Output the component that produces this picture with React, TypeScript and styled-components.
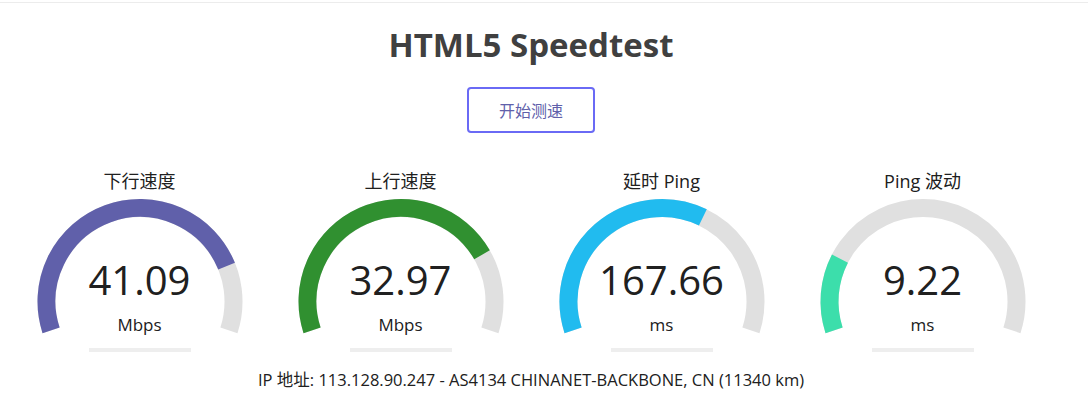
import styled, { createGlobalStyle } from "styled-components";

const GlobalStyle = createGlobalStyle`
  html, body {
    margin: 0;
    padding: 0;
    background: #ffffff;
  }
  body {
    font-family: "Open Sans", "Noto Sans CJK SC", sans-serif;
    color: #202020;
  }
`;

const Page = styled.div`
  width: 1088px;
  height: 416px;
  box-sizing: border-box;
  padding-right: 26px;
  display: flex;
  flex-direction: column;
  align-items: center;
`;

const TopRule = styled.div`
  align-self: stretch;
  margin-top: 2px;
  height: 1px;
  margin-right: -26px;
  background: #ececec;
`;

const Title = styled.h1`
  margin: 21px 0 0;
  font-size: 33px;
  line-height: 42px;
  font-weight: 700;
  color: #404040;
`;

const StartButton = styled.button`
  margin-top: 21px;
  width: 128px;
  height: 46px;
  box-sizing: border-box;
  border: 2px solid #6a6af5;
  border-radius: 4px;
  background: #ffffff;
  color: #6060aa;
  font-family: "Open Sans", "Noto Sans CJK SC", sans-serif;
  font-size: 16px;
  cursor: pointer;
`;

const Gauges = styled.div`
  margin-top: 36px;
  display: flex;
  width: 1044px;
`;

const GaugeArea = styled.div`
  width: 261px;
  display: flex;
  flex-direction: column;
  align-items: center;
`;

const Label = styled.div`
  font-size: 18px;
  line-height: 24px;
  color: #202020;
`;

const Meter = styled.div`
  position: relative;
  margin-top: 1px;
  width: 220px;
  height: 150px;
`;

const Value = styled.div`
  position: absolute;
  left: 0;
  right: 0;
  top: 62px;
  text-align: center;
  font-size: 40px;
  line-height: 48px;
  font-weight: 400;
  color: #202020;
`;

const Unit = styled.div`
  position: absolute;
  left: 0;
  right: 0;
  top: 119px;
  text-align: center;
  font-size: 17px;
  line-height: 24px;
  color: #202020;
`;

const ProgressTrack = styled.div`
  margin-top: 4px;
  width: 102px;
  height: 4px;
  background: #eeeeee;
`;

const IpLine = styled.div`
  margin-top: 17px;
  font-size: 16.5px;
  line-height: 22px;
  color: #202020;
`;

const CX = 110;
const CY = 107.5;
const R = 93.5;
const START = -1.1 * Math.PI;
const SPAN = 1.2 * Math.PI;

function arcPath(fraction: number) {
  const end = START + SPAN * fraction;
  const x1 = CX + R * Math.cos(START);
  const y1 = CY + R * Math.sin(START);
  const x2 = CX + R * Math.cos(end);
  const y2 = CY + R * Math.sin(end);
  const large = SPAN * fraction > Math.PI ? 1 : 0;
  return `M ${x1} ${y1} A ${R} ${R} 0 ${large} 1 ${x2} ${y2}`;
}

type GaugeProps = {
  label: string;
  value: string;
  unit: string;
  amount: number;
  color: string;
};

function Gauge({ label, value, unit, amount, color }: GaugeProps) {
  return (
    <GaugeArea>
      <Label>{label}</Label>
      <Meter>
        <svg width="220" height="150" viewBox="0 0 220 150">
          <path d={arcPath(1)} fill="none" stroke="#e0e0e0" strokeWidth="18" />
          <path d={arcPath(amount)} fill="none" stroke={color} strokeWidth="18" />
        </svg>
        <Value>{value}</Value>
        <Unit>{unit}</Unit>
      </Meter>
      <ProgressTrack />
    </GaugeArea>
  );
}

const meters: GaugeProps[] = [
  { label: "下行速度", value: "41.09", unit: "Mbps", amount: 0.814, color: "#6060aa" },
  { label: "上行速度", value: "32.97", unit: "Mbps", amount: 0.778, color: "#309030" },
  { label: "延时 Ping", value: "167.66", unit: "ms", amount: 0.62, color: "#21bbef" },
  { label: "Ping 波动", value: "9.22", unit: "ms", amount: 0.21, color: "#3cdeab" },
];

export default function App() {
  return (
    <>
      <GlobalStyle />
      <Page>
        <TopRule />
        <Title>HTML5 Speedtest</Title>
        <StartButton>开始测速</StartButton>
        <Gauges>
          {meters.map((m) => (
            <Gauge key={m.label} {...m} />
          ))}
        </Gauges>
        <IpLine>IP 地址: 113.128.90.247 - AS4134 CHINANET-BACKBONE, CN (11340 km)</IpLine>
      </Page>
    </>
  );
}
